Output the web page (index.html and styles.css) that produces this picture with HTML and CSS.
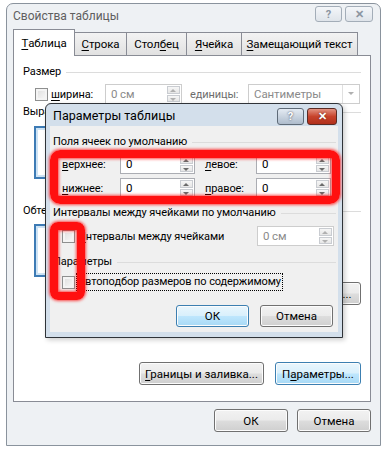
FILE: index.html
```html
<!DOCTYPE html>
<html lang="ru">
<head>
<meta charset="UTF-8" />
<title>Свойства таблицы</title>
<link rel="stylesheet" href="styles.css">
</head>
<body>
  <!-- Main dialog (inactive) -->
  <section class="win main-win">
    <div class="titlebar">
      <span class="title">Свойства таблицы</span>
      <div class="caption">
        <span class="cbtn help">?</span>
        <span class="cbtn close">✕</span>
      </div>
    </div>

    <div class="client">
      <div class="tabs">
        <span class="tab active t-table"><u>Т</u>аблица</span>
        <span class="tab t-row"><u>С</u>трока</span>
        <span class="tab t-col">Стол<u>б</u>ец</span>
        <span class="tab t-cell"><u>Я</u>чейка</span>
        <span class="tab t-alt"><u>З</u>амещающий текст</span>
      </div>

      <div class="panel">
        <div class="group">Размер</div>
        <div class="size-row">
          <span class="check"></span>
          <span class="lbl"><u>ш</u>ирина:</span>
          <span class="field spin disabled w-width">0 см<span class="spin-btns"><i class="up"></i><i class="down"></i></span></span>
          <span class="lbl units">единицы:</span>
          <span class="field combo disabled">Сантиметры<span class="combo-btn"></span></span>
        </div>

        <div class="group">Выравнивание</div>
        <div class="icons">
          <span class="icon-box"></span>
          <span class="icon-box"></span>
          <span class="icon-box"></span>
        </div>

        <div class="group wrap-title">Обтекание</div>
        <div class="icons">
          <span class="icon-box"></span>
          <span class="icon-box"></span>
        </div>

        <div class="pos-row">
          <button class="btn pos-btn" type="button">Положение...</button>
        </div>

        <div class="panel-btns">
          <button class="btn" type="button"><u>Г</u>раницы и заливка...</button>
          <button class="btn focused" type="button">П<u>а</u>раметры...</button>
        </div>
      </div>

      <div class="dlg-btns">
        <button class="btn dlg" type="button">ОК</button>
        <button class="btn dlg" type="button">Отмена</button>
      </div>
    </div>
  </section>

  <!-- Child dialog (active, on top) -->
  <section class="win child-win" role="dialog" aria-labelledby="child-title">
    <div class="titlebar">
      <span class="title" id="child-title">Параметры таблицы</span>
      <div class="caption">
        <span class="cbtn help">?</span>
        <span class="cbtn close">✕</span>
      </div>
    </div>

    <div class="child-client">
      <div class="group">Поля ячеек по умолчанию</div>
      <div class="margins">
        <span class="lbl"><u>в</u>ерхнее:</span>
        <span class="field spin">0<span class="spin-btns"><i class="up"></i><i class="down"></i></span></span>
        <span class="lbl right-lbl"><u>л</u>евое:</span>
        <span class="field spin">0<span class="spin-btns"><i class="up"></i><i class="down"></i></span></span>
        <span class="lbl"><u>н</u>ижнее:</span>
        <span class="field spin">0<span class="spin-btns"><i class="up"></i><i class="down"></i></span></span>
        <span class="lbl right-lbl"><u>п</u>равое:</span>
        <span class="field spin">0<span class="spin-btns"><i class="up"></i><i class="down"></i></span></span>
      </div>

      <div class="group">Интервалы между ячейками по умолчанию</div>
      <div class="check-row">
        <span class="check"></span>
        <span class="check-lbl"><u>И</u>нтервалы между ячейками</span>
        <span class="field spin disabled w-spacing">0 см<span class="spin-btns"><i class="up"></i><i class="down"></i></span></span>
      </div>

      <div class="group">Параметры</div>
      <div class="check-row autofit-row">
        <span class="check"></span>
        <span class="check-lbl focus-ring"><u>А</u>втоподбор размеров по содержимому</span>
      </div>

      <div class="child-btns">
        <button class="btn default" type="button">ОК</button>
        <button class="btn" type="button">Отмена</button>
      </div>
    </div>
  </section>

  <!-- Red annotation marks -->
  <div class="mark mark-fields"></div>
  <div class="mark mark-checks"></div>
</body>
</html>
```

FILE: styles.css
```css
/* Reset */
* {
  box-sizing: border-box;
}
html, body {
  margin: 0;
  padding: 0;
}
body {
  position: relative;
  width: 386px;
  height: 450px;
  background: #fff;
  font-family: Roboto, "Noto Sans", sans-serif;
  font-size: 11px;
  letter-spacing: -0.1px;
  color: #000;
  padding: 3px 0 0 6px;
  overflow: hidden;
}
u {
  text-decoration: underline;
  text-underline-offset: 2px;
}

/* Window frames */
.win {
  border: 1px solid #8a939d;
  border-radius: 7px 7px 0 0;
  background: #eef1f4;
}
.titlebar {
  height: 24px;
  display: flex;
  align-items: center;
  justify-content: space-between;
  padding: 0 7px 0 6px;
}
.title {
  font-size: 12px;
  letter-spacing: 0;
}
.caption {
  display: flex;
  gap: 3px;
  align-self: flex-start;
  margin-top: 2px;
}
.cbtn {
  height: 16px;
  display: flex;
  align-items: center;
  justify-content: center;
  border: 1px solid #a3adb8;
  border-radius: 3px;
  background: linear-gradient(#f4f6f9, #dfe4ea);
  color: #8b95a1;
  font-size: 11px;
  font-weight: 700;
}
.cbtn.help { width: 27px; }
.cbtn.close { width: 28px; }

/* Main dialog */
.main-win {
  width: 375px;
  height: 443px;
}
.main-win .title {
  color: #5f5f5f;
}
.client {
  padding: 0 0 0 6px;
}

.tabs {
  display: flex;
  align-items: flex-end;
  height: 27px;
  padding-left: 3px;
  position: relative;
  z-index: 1;
}
.tab {
  height: 23px;
  display: flex;
  align-items: center;
  justify-content: center;
  border: 1px solid #898c95;
  border-bottom: none;
  margin-left: -1px;
  background: linear-gradient(#f3f3f3, #e1e1e1);
  color: #000;
  white-space: nowrap;
  font-size: 11.5px;
}
.tab.active {
  height: 27px;
  margin: 0 0 -1px -3px;
  padding-bottom: 1px;
  background: #fff;
  position: relative;
}
.t-table { width: 62px; }
.t-row { width: 53px; }
.t-col { width: 61px; }
.t-cell { width: 56px; }
.t-alt { width: 117px; }

.panel {
  width: 358px;
  height: 347px;
  border: 1px solid #898c95;
  background: #fff;
  padding: 8px 9px 0 9px;
  display: flex;
  flex-direction: column;
}

.group {
  display: flex;
  align-items: center;
  gap: 5px;
  height: 16px;
  line-height: 16px;
  white-space: nowrap;
}
.group::after {
  content: "";
  flex: 1;
  height: 1px;
  background: #dcdcdc;
}

.size-row {
  display: flex;
  align-items: center;
  height: 20px;
  margin-top: 4px;
  padding-left: 12px;
}
.size-row .lbl {
  margin-left: 3px;
  width: 54px;
}
.size-row .units {
  margin-left: 8px;
  width: 58px;
  color: #6d6d6d;
}

.icons {
  display: flex;
  gap: 30px;
  padding-left: 11px;
  height: 53px;
  margin-top: 6px;
}
.icon-box {
  width: 52px;
  height: 53px;
  border: 2px solid #3d7bb5;
  background: #fff;
  box-shadow: inset 0 0 0 2px #cde3f5;
}
.wrap-title {
  margin-top: 24px;
}
.wrap-title + .icons {
  margin-top: 5px;
}

.pos-row {
  display: flex;
  justify-content: flex-end;
  margin-top: 5px;
}
.pos-btn {
  width: 90px;
  height: 20px;
}

.panel-btns {
  display: flex;
  justify-content: flex-end;
  gap: 11px;
  margin-top: 57px;
}
.panel-btns .btn:first-child { width: 125px; }
.panel-btns .btn:last-child { width: 86px; }

.dlg-btns {
  display: flex;
  justify-content: flex-end;
  gap: 9px;
  width: 358px;
  margin-top: 7px;
}
.btn.dlg {
  width: 74px;
}

/* Controls */
.btn {
  font: inherit;
  font-size: 11.5px;
  height: 23px;
  padding: 0 4px;
  border: 1px solid #707070;
  border-radius: 3px;
  background: linear-gradient(#f2f2f2 0%, #ebebeb 48%, #dddddd 52%, #cfcfcf 100%);
  box-shadow: inset 0 0 0 1px #fcfcfc;
  color: #000;
  white-space: nowrap;
}
.btn.focused,
.btn.default {
  border-color: #3c7fb1;
  background: linear-gradient(#eaf6fd 0%, #d9f0fc 48%, #bee6fd 52%, #a7d9f5 100%);
}

.check {
  width: 13px;
  height: 13px;
  flex: none;
  border: 1px solid #8e8f8f;
  background: linear-gradient(135deg, #dcdcdc, #fbfbfb);
  box-shadow: inset 0 0 0 2px #f4f4f4;
}

.field {
  position: relative;
  height: 20px;
  border: 1px solid #abadb3;
  background: #fff;
  padding: 0 0 0 5px;
  line-height: 18px;
  white-space: nowrap;
  font-size: 11.5px;
}
.field.disabled {
  color: #8a8a8a;
  border-color: #cdcdcd;
}
.spin-btns {
  position: absolute;
  top: 1px;
  right: 1px;
  bottom: 1px;
  width: 13px;
  display: flex;
  flex-direction: column;
  gap: 1px;
}
.spin-btns i {
  flex: 1;
  border: 1px solid #c9ccd1;
  background: linear-gradient(#f6f6f6, #e6e6e6);
  position: relative;
}
.spin-btns i::after {
  content: "";
  position: absolute;
  left: 2px;
  top: 2px;
  border-left: 3px solid transparent;
  border-right: 3px solid transparent;
}
.spin-btns .up::after {
  border-bottom: 3px solid #6b6b6b;
}
.spin-btns .down::after {
  border-top: 3px solid #6b6b6b;
}
.disabled .spin-btns i::after {
  border-top-color: #b0b0b0;
  border-bottom-color: #b0b0b0;
}
.w-width {
  width: 77px;
}
.combo {
  width: 112px;
  color: #6d6d6d;
}
.combo-btn {
  position: absolute;
  top: 0;
  right: 0;
  bottom: 0;
  width: 17px;
  border-left: 1px solid #e0e0e0;
}
.combo-btn::after {
  content: "";
  position: absolute;
  top: 7px;
  left: 5px;
  border-left: 3px solid transparent;
  border-right: 3px solid transparent;
  border-top: 3px solid #b0b0b0;
}

/* Child dialog */
.child-win {
  position: absolute;
  left: 45px;
  top: 103px;
  width: 298px;
  height: 235px;
  border-color: #2f3338;
  border-radius: 6px 6px 0 0;
  background: #d3dfeb;
  padding: 0 4px 5px 4px;
  box-shadow: 2px 2px 5px rgba(0, 0, 0, 0.2);
}
.child-win .titlebar {
  height: 22px;
  padding: 0 1px 0 3px;
}
.child-win .title {
  font-size: 12.5px;
}
.child-win .caption {
  margin-top: 4px;
}
.child-win .cbtn {
  height: 17px;
  border-color: #5f6b78;
  background: linear-gradient(#e4ebf3, #aebccc);
  color: #fff;
  text-shadow: 0 0 2px #334;
}
.child-win .cbtn.close {
  width: 30px;
  border-color: #5a2b24;
  background: linear-gradient(#e39382, #c7432c 50%, #b1301b);
  text-shadow: 0 0 2px #5a1a10;
}

.child-client {
  height: 206px;
  background: #f0f0f0;
  padding: 8px 2px 0 3px;
  display: flex;
  flex-direction: column;
}

.margins {
  display: grid;
  grid-template-columns: 58px 75px 61px 75px;
  row-gap: 4px;
  align-items: center;
  padding-left: 9px;
  margin-top: 4px;
}
.margins .right-lbl {
  padding-left: 10px;
}

.margins + .group {
  margin-top: 7px;
}
.check-row {
  display: flex;
  align-items: center;
  height: 20px;
  margin-top: 5px;
  padding-left: 9px;
}
.check-lbl {
  margin-left: 2px;
  padding: 0 1px;
  flex: none;
}
.focus-ring {
  outline: 1px dotted #000;
  line-height: 16px;
}
.w-spacing {
  width: 77px;
  margin-left: auto;
  margin-right: 2px;
}
.check-row + .group {
  margin-top: 8px;
}
.autofit-row {
  margin-top: 2px;
}

.child-btns {
  display: flex;
  justify-content: flex-end;
  gap: 11px;
  margin-top: 13px;
  padding-right: 3px;
}
.child-btns .btn {
  width: 73px;
  height: 22px;
}

/* Red annotation marks */
.mark {
  position: absolute;
  border: 8px solid #ff1010;
  border-radius: 10px;
  box-shadow: 0 0 3px 1px rgba(255, 0, 0, 0.7), inset 0 0 3px 1px rgba(255, 0, 0, 0.7);
}
.mark-fields {
  left: 50px;
  top: 150px;
  width: 290px;
  height: 54px;
}
.mark-checks {
  left: 50px;
  top: 222px;
  width: 35px;
  height: 78px;
  border-radius: 8px;
}
```
